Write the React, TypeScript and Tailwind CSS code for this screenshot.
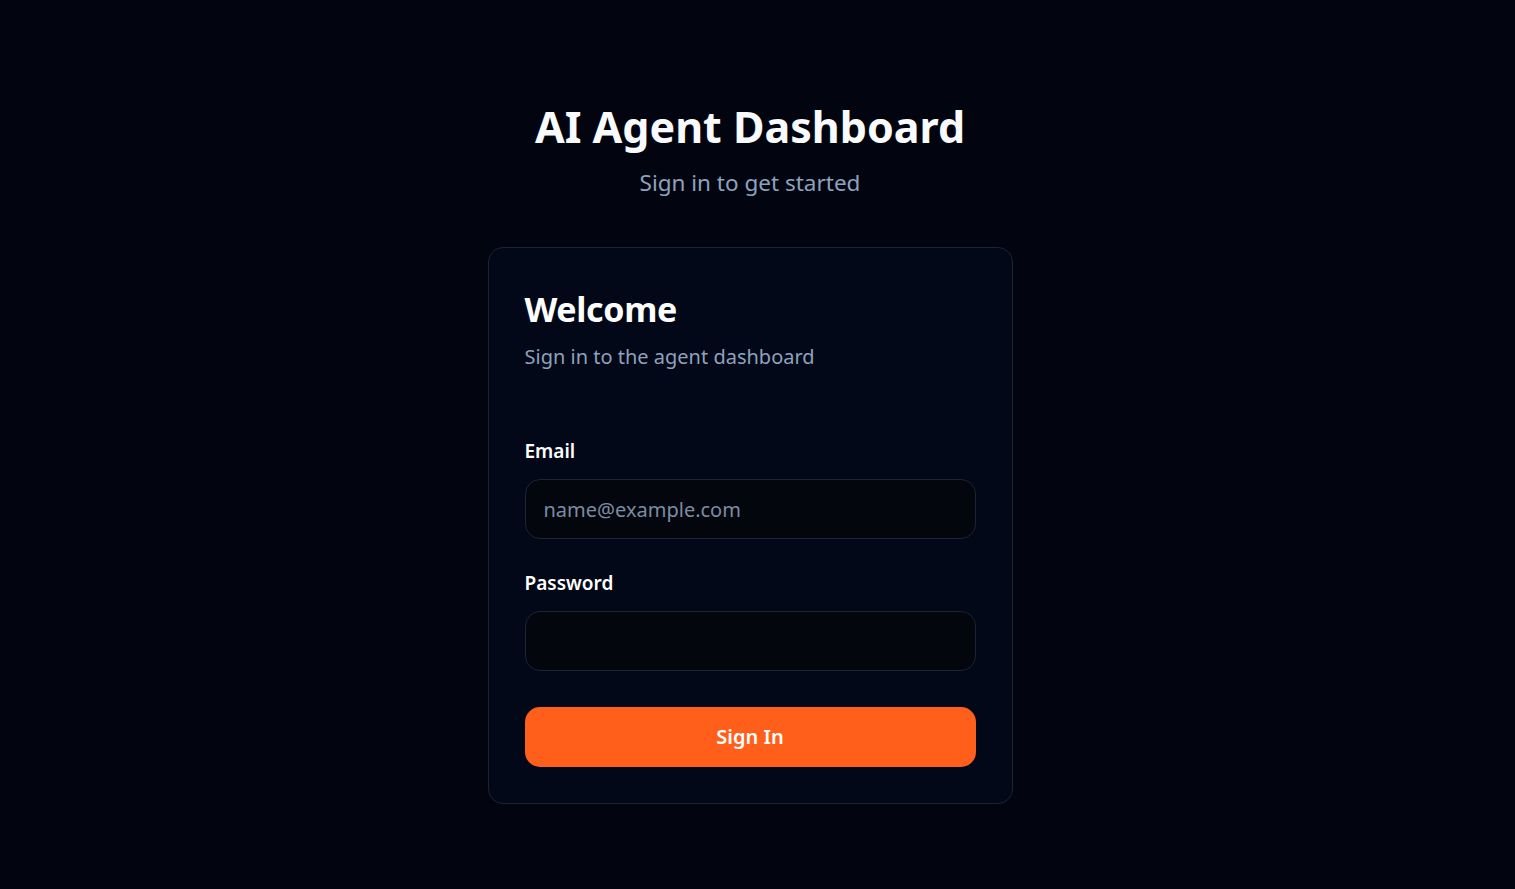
export default function App() {
  return (
    <div
      className="min-h-screen w-full bg-[#020510] flex flex-col items-center pt-[100px] pr-[15px]"
      style={{ fontFamily: '"Noto Sans", "Open Sans", sans-serif' }}
    >
      {/* Header */}
      <h1 className="text-[43px] leading-[54px] font-bold text-[#f8fafc]">AI Agent Dashboard</h1>
      <p className="mt-[14px] text-[22.5px] leading-[30px] text-[#8ea2bd]">Sign in to get started</p>

      {/* Card */}
      <div className="mt-[49px] w-[525px] rounded-[15px] border border-[#1b2436] bg-[#020817] p-[36px]">
        <h2 className="mt-[3px] text-[34px] leading-[44px] font-bold text-white tracking-[-0.01em]">Welcome</h2>
        <p className="mt-[11px] text-[20px] leading-[30px] text-[#8ea2bd]">Sign in to the agent dashboard</p>

        <form className="mt-[65px] flex flex-col" onSubmit={(e) => e.preventDefault()}>
          <label className="text-[19px] leading-[28px] font-semibold text-white">Email</label>
          <input
            type="email"
            placeholder="name@example.com"
            className="mt-[14px] h-[60px] w-full rounded-[15px] border border-[#1b2436] bg-[#03060d] px-[18px] text-[20px] text-white placeholder:text-[#7d8ca3] outline-none"
          />

          <label className="mt-[30px] text-[19px] leading-[28px] font-semibold text-white">Password</label>
          <input
            type="password"
            className="mt-[14px] h-[60px] w-full rounded-[15px] border border-[#1b2436] bg-[#03060d] px-[18px] text-[20px] text-white outline-none"
          />

          <button
            type="submit"
            className="mt-[36px] h-[60px] w-full rounded-[15px] bg-[#ff5f1a] text-[20px] font-semibold text-white"
          >
            Sign In
          </button>
        </form>
      </div>
    </div>
  )
}
